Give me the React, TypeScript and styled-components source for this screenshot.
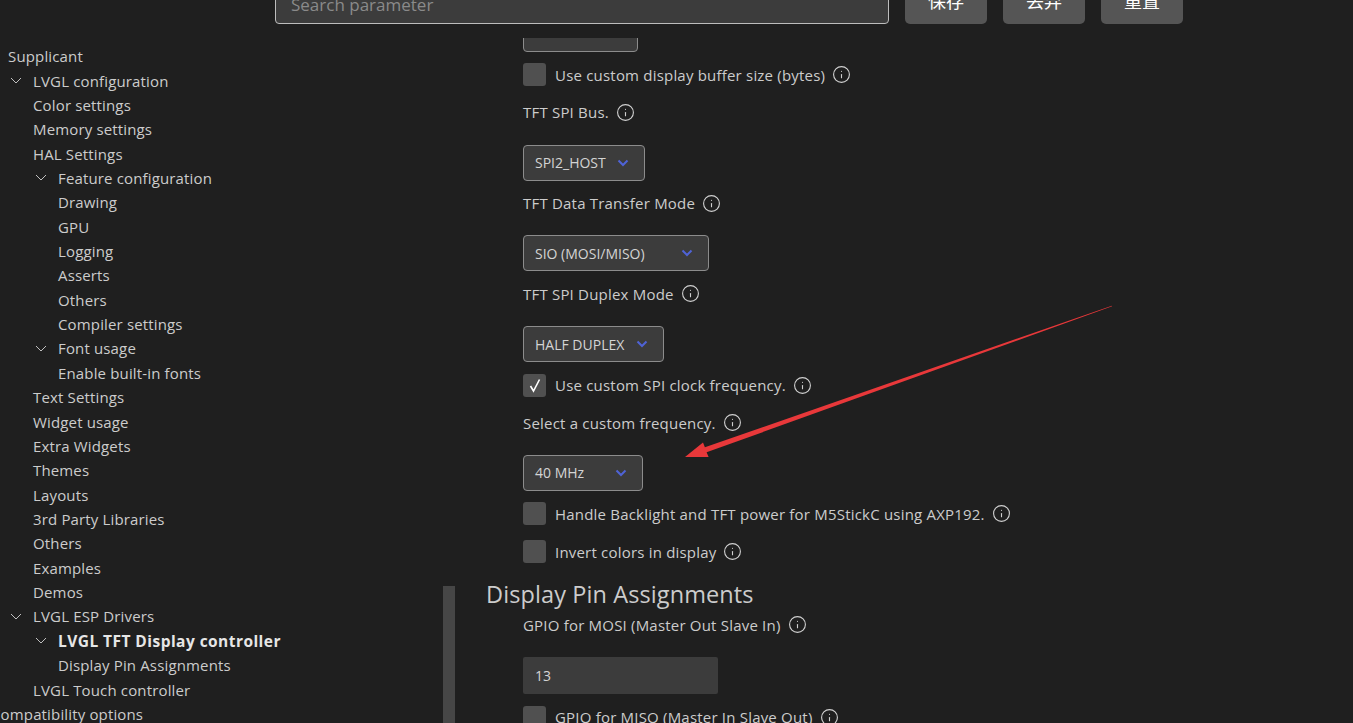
import React from "react";
import styled, { createGlobalStyle } from "styled-components";
import { Info } from "lucide-react";

const Global = createGlobalStyle`
  html, body { margin: 0; padding: 0; background: #1f1f1f; overflow: hidden; }
  body { font-family: "Open Sans", "Noto Sans CJK SC", sans-serif; color: #cccccc; }
  * { box-sizing: border-box; }
`;

const Page = styled.div`
  position: relative;
  width: 1353px;
  height: 723px;
  overflow: hidden;
  display: flex;
  flex-direction: column;
  background: #1f1f1f;
`;

const Header = styled.header`
  position: relative;
  z-index: 2;
  height: 38px;
  flex-shrink: 0;
  display: flex;
  align-items: flex-end;
  gap: 16px;
  padding: 0 0 14px 275px;
  background: #1f1f1f;
`;

const Search = styled.input`
  width: 614px;
  height: 40px;
  border: 1px solid #bdbdbd;
  border-radius: 4px;
  background: #3c3c3c;
  color: #cccccc;
  font-family: "Open Sans", sans-serif;
  font-size: 17px;
  padding: 0 15px;
  outline: none;
  &::placeholder { color: #8a8a8a; }
`;

const ActionButton = styled.button`
  width: 82px;
  height: 48px;
  border: none;
  border-radius: 5px;
  background: #555555;
  color: #ffffff;
  font-family: "Noto Sans CJK SC", sans-serif;
  font-size: 18px;
`;

const Body = styled.div`
  flex: 1;
  min-height: 0;
  display: flex;
`;

const Sidebar = styled.nav`
  position: relative;
  width: 455px;
  flex-shrink: 0;
  padding-top: 6px;
  overflow: hidden;
`;

const ScrollThumb = styled.div`
  position: absolute;
  left: 443px;
  top: 548px;
  width: 12px;
  height: 200px;
  background: #464646;
`;

const TreeItem = styled.div<{ $indent: number; $bold?: boolean }>`
  display: flex;
  align-items: center;
  height: 24.37px;
  margin-left: ${(p) => p.$indent - 24}px;
  font-size: ${(p) => (p.$bold ? "15.5px" : "15px")};
  letter-spacing: ${(p) => (p.$bold ? "0.45px" : "0.15px")};
  white-space: nowrap;
  font-weight: ${(p) => (p.$bold ? 700 : 400)};
  color: ${(p) => (p.$bold ? "#e6e6e6" : "#cccccc")};
`;

const ChevronSlot = styled.span`
  width: 24px;
  flex-shrink: 0;
  display: flex;
  align-items: center;
  padding-left: 0.5px;
`;

const Main = styled.main`
  flex: 1;
  min-width: 0;
  overflow: hidden;
  padding-left: 31px;
`;

const MainInner = styled.div`
  display: flex;
  flex-direction: column;
  align-items: flex-start;
  gap: 10.9px;
  margin-top: -22px;
  padding-left: 37px;
`;

const Label = styled.div`
  display: flex;
  align-items: center;
  gap: 7px;
  height: 23px;
  font-size: 15px;
  letter-spacing: 0.2px;
  margin-bottom: 10px;
  white-space: nowrap;
`;

const CheckRow = styled.div`
  display: flex;
  align-items: center;
  gap: 9px;
  height: 24px;
  margin-bottom: 3px;
  font-size: 15px;
  letter-spacing: 0.2px;
  white-space: nowrap;
`;

const TextWithInfo = styled.span`
  display: flex;
  align-items: center;
  gap: 7px;
`;

const Box = styled.span`
  width: 23px;
  height: 23px;
  border-radius: 3px;
  background: #505050;
  display: flex;
  align-items: center;
  justify-content: center;
`;

const Select = styled.div<{ $w: number }>`
  width: ${(p) => p.$w}px;
  height: 36px;
  border: 1px solid #8c8c8c;
  border-radius: 4px;
  background: #3c3c3c;
  display: flex;
  align-items: center;
  justify-content: space-between;
  padding: 0 15px 0 11px;
  font-size: 14px;
  color: #d4d4d4;
  white-space: nowrap;
`;

const Heading = styled.h2`
  margin: 0 0 -7px -37px;
  height: 32px;
  line-height: 32px;
  font-size: 23.5px;
  letter-spacing: 0.1px;
  font-weight: 400;
  color: #cccccc;
`;

const NumberInput = styled.div`
  width: 195px;
  height: 37px;
  border-radius: 2px;
  background: #3c3c3c;
  display: flex;
  align-items: center;
  padding-left: 12px;
  font-size: 14px;
  color: #d4d4d4;
`;

const ArrowLayer = styled.svg`
  position: absolute;
  left: 0;
  top: 0;
  z-index: 3;
  pointer-events: none;
`;

const TreeChevron = () => (
  <svg width="12" height="7" viewBox="0 0 12 7">
    <polyline points="1,1 6,6 11,1" fill="none" stroke="#c0c0c0" strokeWidth="1" />
  </svg>
);

const SelectChevron = () => (
  <svg width="12" height="8" viewBox="0 0 12 8">
    <polyline points="1.5,1.5 6,6 10.5,1.5" fill="none" stroke="#4f63d6" strokeWidth="2" />
  </svg>
);

const InfoIcon = () => <Info size={19} strokeWidth={1.4} color="#d0d0d0" />;

type Node = { t: string; i: number; c?: boolean; b?: boolean };

const tree: Node[] = [
  { t: "Supplicant", i: 8 },
  { t: "LVGL configuration", i: 33, c: true },
  { t: "Color settings", i: 33 },
  { t: "Memory settings", i: 33 },
  { t: "HAL Settings", i: 33 },
  { t: "Feature configuration", i: 58, c: true },
  { t: "Drawing", i: 58 },
  { t: "GPU", i: 58 },
  { t: "Logging", i: 58 },
  { t: "Asserts", i: 58 },
  { t: "Others", i: 58 },
  { t: "Compiler settings", i: 58 },
  { t: "Font usage", i: 58, c: true },
  { t: "Enable built-in fonts", i: 58 },
  { t: "Text Settings", i: 33 },
  { t: "Widget usage", i: 33 },
  { t: "Extra Widgets", i: 33 },
  { t: "Themes", i: 33 },
  { t: "Layouts", i: 33 },
  { t: "3rd Party Libraries", i: 33 },
  { t: "Others", i: 33 },
  { t: "Examples", i: 33 },
  { t: "Demos", i: 33 },
  { t: "LVGL ESP Drivers", i: 33, c: true },
  { t: "LVGL TFT Display controller", i: 58, c: true, b: true },
  { t: "Display Pin Assignments", i: 58 },
  { t: "LVGL Touch controller", i: 33 },
  { t: "Compatibility options", i: -9 },
];

const Check = ({ checked, text }: { checked?: boolean; text: string }) => (
  <CheckRow>
    <Box>
      {checked && (
        <svg width="16" height="16" viewBox="0 0 16 16">
          <polyline points="3.5,9 6.5,14 12.5,2.5" fill="none" stroke="#ffffff" strokeWidth="1.6" />
        </svg>
      )}
    </Box>
    <TextWithInfo>
      {text}
      <InfoIcon />
    </TextWithInfo>
  </CheckRow>
);

const Field = ({ text }: { text: string }) => (
  <Label>
    {text}
    <InfoIcon />
  </Label>
);

const Dropdown = ({ value, w }: { value: string; w: number }) => (
  <Select $w={w}>
    <span>{value}</span>
    <SelectChevron />
  </Select>
);

export default function App() {
  return (
    <Page>
      <Global />
      <Header>
        <Search placeholder="Search parameter" />
        <ActionButton>保存</ActionButton>
        <ActionButton>丢弃</ActionButton>
        <ActionButton>重置</ActionButton>
      </Header>
      <Body>
        <Sidebar>
          {tree.map((n, k) => (
            <TreeItem key={k} $indent={n.i} $bold={n.b}>
              <ChevronSlot>{n.c && <TreeChevron />}</ChevronSlot>
              {n.t}
            </TreeItem>
          ))}
          <ScrollThumb />
        </Sidebar>
        <Main>
          <MainInner>
            <Select $w={115} />
            <Check text="Use custom display buffer size (bytes)" />
            <Field text="TFT SPI Bus." />
            <Dropdown value="SPI2_HOST" w={122} />
            <Field text="TFT Data Transfer Mode" />
            <Dropdown value="SIO (MOSI/MISO)" w={186} />
            <Field text="TFT SPI Duplex Mode" />
            <Dropdown value="HALF DUPLEX" w={141} />
            <Check checked text="Use custom SPI clock frequency." />
            <Field text="Select a custom frequency." />
            <Dropdown value="40 MHz" w={120} />
            <Check text="Handle Backlight and TFT power for M5StickC using AXP192." />
            <Check text="Invert colors in display" />
            <Heading>Display Pin Assignments</Heading>
            <Field text="GPIO for MOSI (Master Out Slave In)" />
            <NumberInput>13</NumberInput>
            <Check text="GPIO for MISO (Master In Slave Out)" />
          </MainInner>
        </Main>
      </Body>
      <ArrowLayer width="1353" height="723" viewBox="0 0 1353 723">
        <polygon
          points="1112.1,306.3 706.6,452.3 708.6,457 685,457 703,442.6 704.9,447.3 1111.9,305.7"
          fill="#e8383a"
        />
      </ArrowLayer>
    </Page>
  );
}
